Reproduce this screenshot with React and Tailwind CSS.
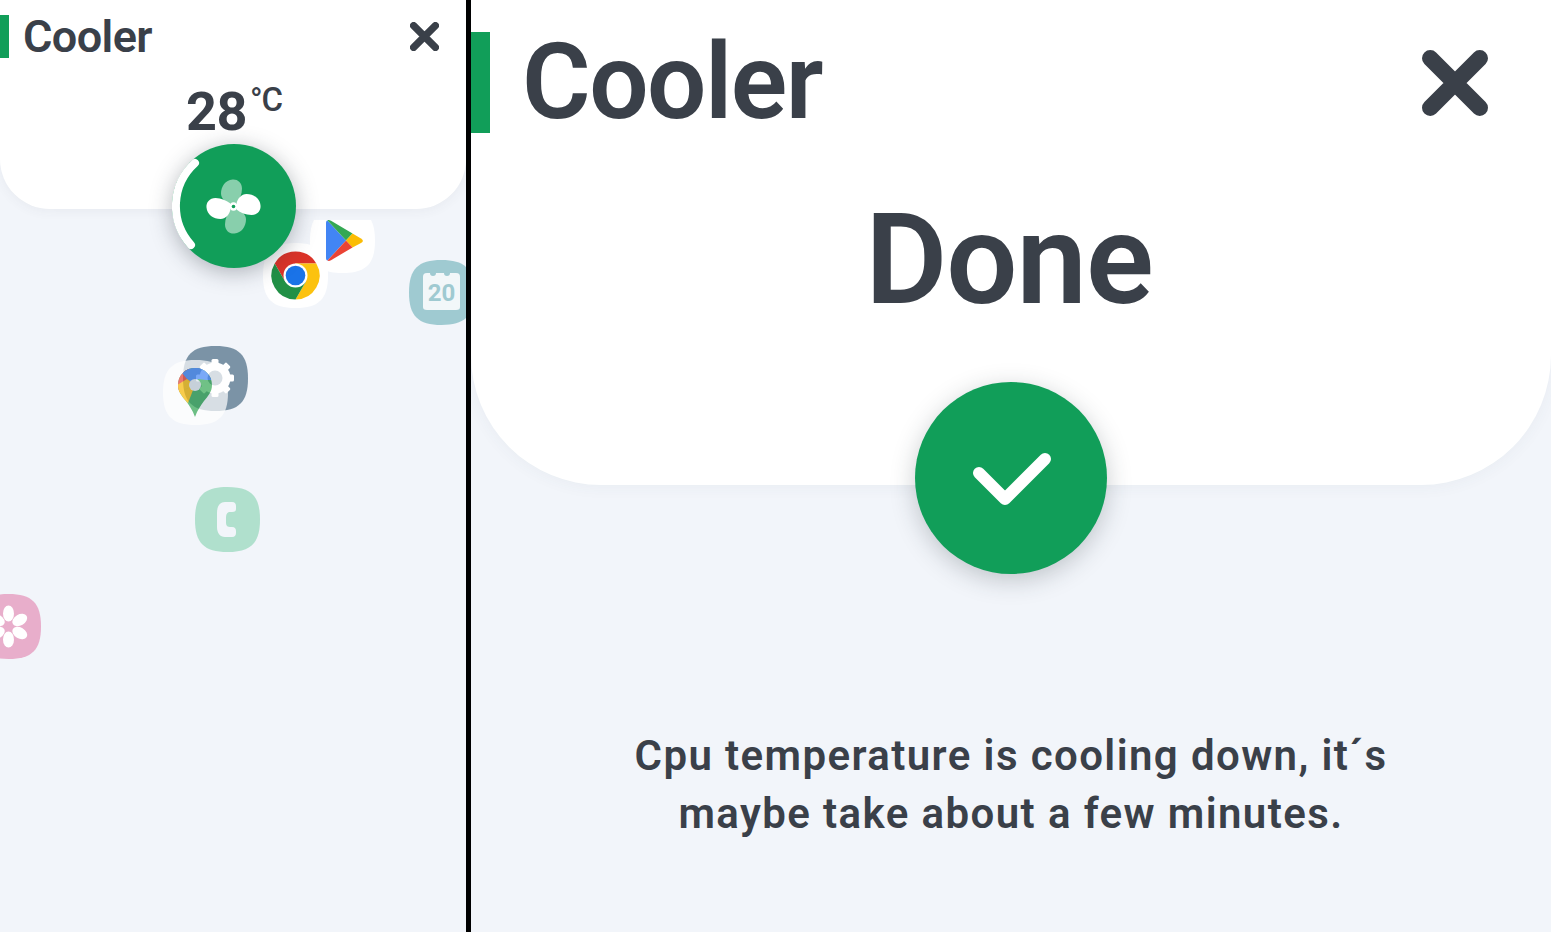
import React from 'react';

// Squircle shape shared by all app icons
const SQUIRCLE = 'M32.5 0C56 0 65 9 65 32.5S56 65 32.5 65 0 56 0 32.5 9 0 32.5 0Z';

const CloseIcon = ({ className }) => (
  <svg viewBox="0 0 48 48" className={className} fill="none">
    <path d="M6 6L42 42M42 6L6 42" stroke="#3a4049" strokeWidth="12" strokeLinecap="round" />
  </svg>
);

const FanBlade = ({ angle, opacity }) => (
  <path
    d="M-3 -3C-7 -6 -12 -8.5 -18 -8.5C-24 -8.5 -27.5 -4 -27 1C-26.5 8 -20 12.5 -13 12.5C-8 12.5 -4 8 -3 3Z"
    fill="#fff"
    opacity={opacity}
    transform={`rotate(${angle})`}
  />
);

const FanButton = () => (
  <div className="absolute left-[172px] top-[144px] h-[124px] w-[124px] rounded-full bg-[#119e59] shadow-[0_4px_22px_rgba(40,50,60,0.35)]">
    <svg viewBox="0 0 124 124" className="h-full w-full" fill="none">
      <path d="M23 19A58 58 0 0 0 19 101" stroke="#fff" strokeWidth="8" strokeLinecap="round" />
      <g transform="translate(61.5 62.5)">
        <FanBlade angle={90} opacity={0.5} />
        <FanBlade angle={270} opacity={0.5} />
        <FanBlade angle={0} opacity={1} />
        <FanBlade angle={180} opacity={1} />
        <circle r="4.2" fill="#fff" />
        <circle r="1.8" fill="#119e59" />
      </g>
    </svg>
  </div>
);

const AppIcon = ({ x, y, color, children, className = '' }) => (
  <div className={`absolute h-[65px] w-[65px] ${className}`} style={{ left: x, top: y }}>
    <svg viewBox="0 0 65 65" className="h-full w-full">
      <path d={SQUIRCLE} fill={color} />
      {children}
    </svg>
  </div>
);

const PlayGlyph = () => (
  <g transform="translate(16 12)">
    <path d="M0 3C0 1 1 .5 1.5 .5L20 20.5 1.5 40.5C1 40.5 0 40 0 38Z" fill="#4285f4" />
    <path d="M1.5 .5C2.5 -.3 3.5 0 5 .8L26.5 13.5 20 20.5Z" fill="#34a853" />
    <path d="M26.5 13.5L35 18.5C37.5 20 37.5 21.5 35 23L26.5 27.5 20 20.5Z" fill="#fbbc04" />
    <path d="M20 20.5L26.5 27.5 5 40.2C3.5 41 2.5 41.2 1.5 40.5Z" fill="#ea4335" />
  </g>
);

const ChromeGlyph = () => (
  <g transform="translate(8.5 8.5)">
    <path d="M3.2 12A24 24 0 0 1 44.8 12L24 12 13.6 30Z" fill="#db3328" />
    <path d="M44.8 12A24 24 0 0 1 24 48L34.4 30 24 12Z" fill="#fcc20f" />
    <path d="M24 48A24 24 0 0 1 3.2 12L13.6 30 34.4 30Z" fill="#219046" />
    <circle cx="24" cy="24" r="12" fill="#fff" />
    <circle cx="24" cy="24" r="9.8" fill="#1a73e8" />
  </g>
);

const GearGlyph = () => (
  <g transform="translate(32 32)" fill="#fff">
    <circle r="15.5" />
    {[0, 45, 90, 135, 180, 225, 270, 315].map((a) => (
      <rect key={a} x="-3.5" y="-19" width="7" height="7" rx="1.5" transform={`rotate(${a})`} />
    ))}
    <circle r="7.5" fill="#7b93a6" />
  </g>
);

const MapsGlyph = () => (
  <g transform="translate(15 8)">
    <clipPath id="pin">
      <path d="M17 0C7 0 0 7.5 0 17C0 24 4 28 8 33C11 37 14.5 42 17 49C19.5 42 23 37 26 33C30 28 34 24 34 17C34 7.5 27 0 17 0Z" />
    </clipPath>
    <g clipPath="url(#pin)">
      <rect x="-1" y="-1" width="36" height="52" fill="#34a853" />
      <path d="M-1 -1H12V15L5 24H-1Z" fill="#ea4335" />
      <path d="M4 5L12 -1H26L17 17 9 11Z" fill="#4285f4" />
      <path d="M17 -1H36V12H28L20 11Z" fill="#4285f4" />
      <path d="M0 24L17 17 10 35 4 32Z" fill="#fbbc04" />
      <path d="M9 11L17 17 0 25 -1 17Z" fill="#fbbc04" />
    </g>
    <circle cx="17" cy="17" r="6" fill="#e6ebef" />
  </g>
);

const LeftPanel = () => (
  <div className="relative h-full w-[466px] shrink-0 overflow-hidden bg-[#f2f5fa]">
    <div className="h-[209px] rounded-b-[50px] bg-white pt-[15px] shadow-[0_2px_12px_rgba(60,70,90,0.06)]">
      <div className="flex items-center justify-between pr-[27px]">
        <div className="flex h-[43px] items-center gap-[14px]">
          <div className="h-full w-[9px] bg-[#119e59]" />
          <h1 className="text-[45px] font-semibold leading-none tracking-[-0.6px] text-[#3a4049]">Cooler</h1>
        </div>
        <CloseIcon className="h-[29px] w-[29px]" />
      </div>
      <div className="mt-[22px] flex justify-center pl-[2px] text-[#3a4049]">
        <span className="text-[54px] font-bold leading-[64px] tracking-[-0.5px]">28</span>
        <span className="ml-[3px] text-[33px] font-medium leading-[40px] tracking-[-1px]">°C</span>
      </div>
    </div>

    <AppIcon x={310} y={208} color="#fff" className="[clip-path:inset(12px_0_0_0)]">
      <PlayGlyph />
    </AppIcon>
    <AppIcon x={263} y={243} color="#fff">
      <ChromeGlyph />
    </AppIcon>
    <FanButton />
    <AppIcon x={409} y={260} color="#9fcad1">
      <path d="M14 17C14 14.5 15 13 18 13H21A3 3 0 0 0 27 13H35A3 3 0 0 0 41 13H47C50 13 51 14.5 51 17V47C51 49 50 50 47 50H18C15 50 14 49 14 47Z" fill="#f2f7f9" />
      <text x="32.5" y="41" textAnchor="middle" fontSize="24" fontWeight="700" fill="#9fcad1">20</text>
    </AppIcon>
    <AppIcon x={183} y={346} color="#7b93a6">
      <GearGlyph />
    </AppIcon>
    <div className="absolute left-0 top-0 opacity-70">
      <AppIcon x={163} y={360} color="#fff">
        <MapsGlyph />
      </AppIcon>
    </div>
    <AppIcon x={195} y={487} color="#b0e0cd">
      <path d="M30 15H37C40 15 41 17 41 19V22C41 24 40 25 37 25H35C32 25 31 27 31 32V36C31 39 33 40 35 40H37C40 40 41 42 41 44V46C41 48 40 50 37 50H30C25 50 22 46 22 40V26C22 19 25 15 30 15Z" fill="#f2f5fa" />
    </AppIcon>
    <AppIcon x={-24} y={594} color="#e8aecb">
      <g transform="translate(32.5 32.5)" fill="#fff">
        {[0, 60, 120, 180, 240, 300].map((a) => (
          <ellipse key={a} cx="0" cy="-13" rx="5.5" ry="8" transform={`rotate(${a})`} />
        ))}
        <circle r="4.5" fill="#e8aecb" />
      </g>
    </AppIcon>
  </div>
);

const RightPanel = () => (
  <div className="flex h-full flex-1 flex-col bg-[#f2f5fa]">
    <div className="h-[485px] shrink-0 rounded-b-[130px] bg-white pt-[32px] shadow-[0_2px_16px_rgba(60,70,90,0.05)]">
      <div className="flex items-center justify-between pr-[63px]">
        <div className="flex h-[101px] items-center gap-[32px]">
          <div className="h-full w-[19px] bg-[#119e59]" />
          <h1 className="text-[105px] font-semibold leading-none tracking-[-1.5px] text-[#3a4049]">Cooler</h1>
        </div>
        <CloseIcon className="h-[66px] w-[66px]" />
      </div>
      <h2 className="mt-[57px] pr-[4px] text-center text-[126px] font-semibold leading-[140px] tracking-[-1px] text-[#3a4049]">Done</h2>
    </div>
    <div className="relative z-10 mx-auto -mt-[103px] flex h-[192px] w-[192px] items-center justify-center rounded-full bg-[#119e59] shadow-[0_6px_24px_rgba(40,50,60,0.25)]">
      <svg viewBox="0 0 192 192" className="h-full w-full" fill="none">
        <path d="M64 91L90 117 130 77" stroke="#fff" strokeWidth="12" strokeLinecap="round" strokeLinejoin="round" />
      </svg>
    </div>
    <p className="mt-[153px] text-center text-[42px] font-semibold leading-[58px] tracking-[1.4px] text-[#3a4049]">
      Cpu temperature is cooling down, it´s
      <br />
      maybe take about a few minutes.
    </p>
  </div>
);

export default function App() {
  return (
    <div className="flex h-[932px] w-[1551px] overflow-hidden font-[Roboto,sans-serif]">
      <LeftPanel />
      <div className="h-full w-[5px] shrink-0 bg-black" />
      <RightPanel />
    </div>
  );
}
